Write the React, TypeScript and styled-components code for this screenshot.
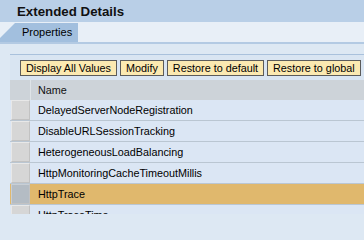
import React from 'react';
import styled, { createGlobalStyle } from 'styled-components';

const GlobalStyle = createGlobalStyle`
  html, body {
    margin: 0;
    padding: 0;
    background: #dde8f3;
    overflow: hidden;
  }
  body {
    font-family: 'Liberation Sans', Arial, sans-serif;
    font-size: 10.8px;
    color: #000;
  }
`;

const properties = [
  'DelayedServerNodeRegistration',
  'DisableURLSessionTracking',
  'HeterogeneousLoadBalancing',
  'HttpMonitoringCacheTimeoutMillis',
  'HttpTrace',
  'HttpTraceTime',
];

const selectedName = 'HttpTrace';

const actions = ['Display All Values', 'Modify', 'Restore to default', 'Restore to global'];

const App: React.FC = () => {
  return (
    <>
      <GlobalStyle />
      <Page>
        <TitleBar>Extended Details</TitleBar>
        <TabStrip>
          <Tab>Properties</Tab>
        </TabStrip>
        <Content>
          <Panel>
            <Toolbar>
              {actions.map((label) => (
                <ToolButton key={label}>{label}</ToolButton>
              ))}
            </Toolbar>
            <Table>
              <HeaderRow>
                <HeaderSelector />
                <HeaderCell>Name</HeaderCell>
              </HeaderRow>
              {properties.map((name) => (
                <Row key={name} $selected={name === selectedName}>
                  <Selector $selected={name === selectedName} />
                  <Cell>{name}</Cell>
                </Row>
              ))}
            </Table>
          </Panel>
        </Content>
      </Page>
    </>
  );
};

export default App;

const Page = styled.div`
  width: 364px;
  height: 214px;
  overflow: hidden;
  display: flex;
  flex-direction: column;
`;

const TitleBar = styled.div`
  height: 22px;
  flex: none;
  background: #b9cfe7;
  padding-left: 17px;
  font-size: 13.3px;
  font-weight: bold;
  line-height: 23px;
  color: #111;
`;

const TabStrip = styled.div`
  height: 19px;
  flex: none;
  padding-top: 1px;
  background: #e8eff7;
  border-bottom: 2px solid #b3cae3;
  display: flex;
  align-items: stretch;
`;

const Tab = styled.div`
  width: 78px;
  box-sizing: border-box;
  padding-left: 22px;
  background: #a2bfde;
  clip-path: polygon(15px 0, 100% 0, 100% 100%, 0 100%, 0 15px);
  line-height: 19px;
  font-size: 11px;
  color: #000;
`;

const Content = styled.div`
  flex: 1;
  padding: 10px 0 0 10px;
  display: flex;
`;

const Panel = styled.div`
  flex: 1;
  background: #d9e5f2;
  border-top: 1px solid #a9c1dc;
  display: flex;
  flex-direction: column;
`;

const Toolbar = styled.div`
  display: flex;
  gap: 3px;
  padding: 5px 10px 4px 10px;
`;

const ToolButton = styled.div`
  height: 14px;
  padding: 0 5px;
  border: 1px solid #5b5b5b;
  background: #fbe9b1;
  line-height: 14px;
  font-size: 10.8px;
  white-space: nowrap;
  color: #000;
`;

const Table = styled.div`
  display: flex;
  flex-direction: column;
`;

const HeaderRow = styled.div`
  height: 20px;
  display: flex;
  background: #cdd3d9;
`;

const HeaderSelector = styled.div`
  width: 20px;
  border-right: 1px solid #dfe4e8;
`;

const HeaderCell = styled.div`
  flex: 1;
  padding-left: 7px;
  line-height: 20px;
  color: #111;
`;

const Row = styled.div<{ $selected?: boolean }>`
  height: 20px;
  flex: none;
  display: flex;
  background: ${(p) => (p.$selected ? '#e0b86d' : '#dbe6f4')};
  border-bottom: 1px solid #bac6d2;
`;

const Selector = styled.div<{ $selected?: boolean }>`
  width: 19px;
  margin: 0 1px 0 1px;
  box-sizing: border-box;
  background: ${(p) => (p.$selected ? '#b4bcc4' : '#d6d6d6')};
  border: 1px solid ${(p) => (p.$selected ? '#c9cfd5' : '#e8e8e8')};
  border-right-color: #c2c2c2;
  border-bottom-color: #c2c2c2;
`;

const Cell = styled.div`
  flex: 1;
  padding-left: 7px;
  line-height: 20px;
  white-space: nowrap;
  overflow: hidden;
`;
